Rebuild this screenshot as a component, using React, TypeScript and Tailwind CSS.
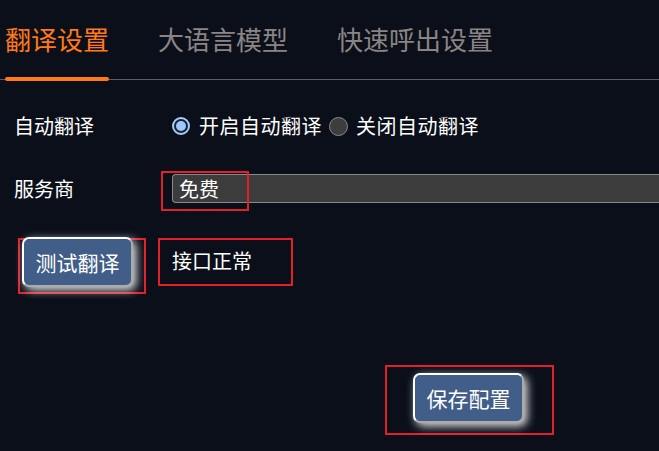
import { useState } from "react";

const font = { fontFamily: '"Noto Sans CJK SC", "Noto Sans", sans-serif' };

const tabs = ["翻译设置", "大语言模型", "快速呼出设置"];

const Radio = ({ checked }: { checked: boolean }) =>
  checked ? (
    <span className="w-[18px] h-[18px] rounded-full border-2 border-[#a3cbfb] bg-[#1b2232] p-[2px] flex">
      <span className="flex-1 rounded-full bg-[#9ec8fb]" />
    </span>
  ) : (
    <span className="w-[19px] h-[19px] rounded-full border border-[#8a8a8a] bg-[#3d3d3d]" />
  );

const GlowButton = ({ label }: { label: string }) => (
  <button className="w-[111px] h-[50px] rounded-[7px] border-2 border-white [border-style:outset] bg-[#405e88] text-white text-[21px] leading-none shadow-[3px_3px_10px_rgba(255,255,255,0.9)]">
    {label}
  </button>
);

export default function App() {
  const [active, setActive] = useState(0);
  const [auto, setAuto] = useState(true);

  return (
    <div className="w-[659px] h-[451px] bg-[#0b0f1a] text-white overflow-hidden" style={font}>
      <div className="flex items-start gap-[49px] px-[5px] pt-[26px] border-b border-[#5e5e5e]">
        {tabs.map((t, i) => (
          <div key={t} className="flex flex-col cursor-pointer" onClick={() => setActive(i)}>
            <span className={`text-[26px] leading-[26px] ${i === active ? "text-[#ff7a17]" : "text-[#8a8584]"}`}>{t}</span>
            {i === active && <span className="mt-[25px] -mb-[2px] h-1 rounded-full bg-[#ff7a17]" />}
          </div>
        ))}
      </div>

      <div className="pl-[14px] text-[20px] leading-[20px]">
        <div className="flex items-center h-[40px] mt-[26px]">
          <span className="w-[158px]">自动翻译</span>
          <label className="flex items-center gap-[9px] cursor-pointer" onClick={() => setAuto(true)}>
            <Radio checked={auto} />
            <span className="tracking-[0.5px]">开启自动翻译</span>
          </label>
          <label className="flex items-center gap-[8px] ml-[7px] cursor-pointer" onClick={() => setAuto(false)}>
            <Radio checked={!auto} />
            <span className="tracking-[0.5px]">关闭自动翻译</span>
          </label>
        </div>

        <div className="flex items-center h-[29px] mt-[28px]">
          <span className="w-[158px]">服务商</span>
          <div className="relative flex-1 h-full">
            <div className="h-full bg-[#3c3c3c] border border-[#8a8a8a] border-r-0 rounded-l-[4px] flex items-center pl-[6px]">
              免费
            </div>
            <div className="absolute left-[-11px] top-[-3px] w-[88px] h-[40px] border-2 border-[#e3202a]" />
          </div>
        </div>

        <div className="flex mt-[35px]">
          <div className="w-[128px] h-[56px] ml-[4px] border-2 border-[#e3202a]">
            <div className="ml-[2px] -mt-[3px]">
              <GlowButton label="测试翻译" />
            </div>
          </div>
          <div className="w-[135px] h-[48px] ml-[12px] border-2 border-[#e3202a] flex items-center pl-[12px] pb-[2px]">
            接口正常
          </div>
        </div>

        <div className="mt-[71px] ml-[371px] w-[169px] h-[70px] border-2 border-[#e3202a] pl-[26px] pt-[6px]">
          <GlowButton label="保存配置" />
        </div>
      </div>
    </div>
  );
}
